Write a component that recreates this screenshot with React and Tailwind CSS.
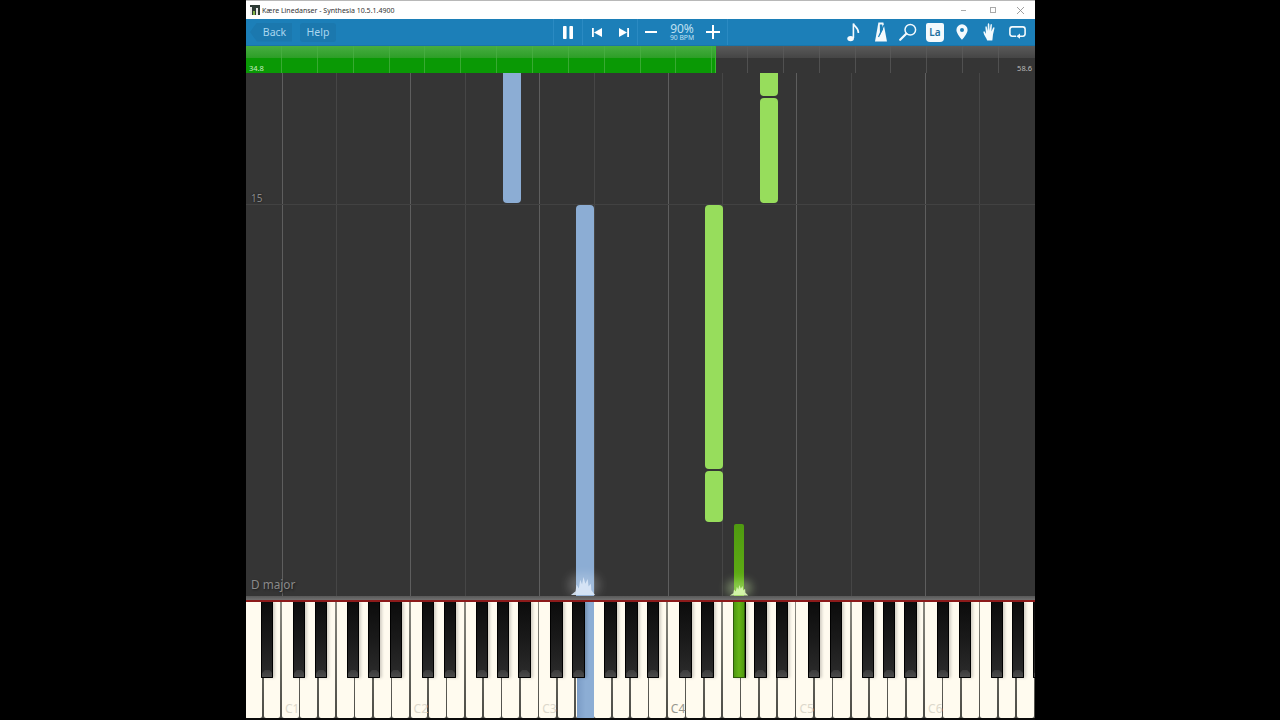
const KEY_W = 18.39;
const KEY_START = -0.8;

const whiteKeys = Array.from({ length: 44 }, (_, i) => i);
const labels = { 2: 'C1', 9: 'C2', 16: 'C3', 23: 'C4', 30: 'C5', 37: 'C6' };

// black keys sit at these offsets from the C of each octave
const blackOffsets = [11, 33, 65, 86, 107.5];
const octavePx = KEY_W * 7;
const blackLefts = [15];
for (let o = 0; o < 7; o++) {
  for (const off of blackOffsets) {
    blackLefts.push(36 + o * octavePx + off);
  }
}

const gridLines = [
  [36, 'bg-[#5e5e5e]'], [90, 'bg-[#464646]'], [164, 'bg-[#5e5e5e]'], [219, 'bg-[#464646]'],
  [293, 'bg-[#5e5e5e]'], [348, 'bg-[#464646]'], [422, 'bg-[#5e5e5e]'], [476, 'bg-[#464646]'],
  [550, 'bg-[#5e5e5e]'], [605, 'bg-[#464646]'], [679, 'bg-[#5e5e5e]'], [733, 'bg-[#464646]'],
];

const notes = [
  { l: 257, t: -4, w: 18, h: 134, c: 'bg-[#8cadd4] rounded-[4px]' },
  { l: 330, t: 132, w: 18, h: 400, c: 'bg-[#8cadd4] rounded-t-[4px]' },
  { l: 514, t: -4, w: 18, h: 27, c: 'bg-[#97dd5c] rounded-[4px]' },
  { l: 514, t: 25, w: 18, h: 105, c: 'bg-[#97dd5c] rounded-[4px]' },
  { l: 459, t: 132, w: 18, h: 264, c: 'bg-[#97dd5c] rounded-[4px]' },
  { l: 459, t: 398, w: 18, h: 51, c: 'bg-[#97dd5c] rounded-[4px]' },
  { l: 488, t: 451, w: 10, h: 80, c: 'bg-gradient-to-b from-[#4f9a10] to-[#66b416] rounded-t-[2px]' },
];

const ticks = Array.from({ length: 21 }, (_, i) => 35 + i * 35.85);

function PauseIcon() {
  return (
    <svg width="10" height="13" viewBox="0 0 10 13" fill="#fff">
      <rect x="0" y="0" width="3.6" height="13" rx="0.8" />
      <rect x="6.4" y="0" width="3.6" height="13" rx="0.8" />
    </svg>
  );
}

function PrevIcon() {
  return (
    <svg width="10" height="9" viewBox="0 0 10 9" fill="#fff">
      <rect x="0" y="0" width="1.8" height="9" />
      <path d="M10 0v9L2 4.5z" />
    </svg>
  );
}

function NextIcon() {
  return (
    <svg width="10" height="9" viewBox="0 0 10 9" fill="#fff">
      <rect x="8.2" y="0" width="1.8" height="9" />
      <path d="M0 0v9l8-4.5z" />
    </svg>
  );
}

function NoteIcon() {
  return (
    <svg width="13" height="20" viewBox="0 0 13 20" fill="none">
      <ellipse cx="3.6" cy="16.6" rx="3.3" ry="2.6" fill="#f4fafd" />
      <path d="M6.4 16V1.5c.6 3 5.5 4.5 5 9.5" stroke="#f4fafd" strokeWidth="1.6" />
    </svg>
  );
}

function MetronomeIcon() {
  return (
    <svg width="12" height="20" viewBox="0 0 12 20">
      <path d="M3.4 0.5h5L12 19.5H0z" fill="#f4fafd" />
      <path d="M3.5 15L9 3" stroke="#1c7fb8" strokeWidth="1.2" />
      <path d="M4.8 2.5h2.4L8 7.5 5 13z" fill="#1c7fb8" />
    </svg>
  );
}

function SearchIcon() {
  return (
    <svg width="18" height="18" viewBox="0 0 18 18" fill="none" stroke="#f4fafd">
      <circle cx="11.3" cy="6.7" r="5.3" strokeWidth="1.5" />
      <path d="M7.2 10.8L1.2 16.8" strokeWidth="2.2" strokeLinecap="round" />
    </svg>
  );
}

function PinIcon() {
  return (
    <svg width="12" height="16" viewBox="0 0 12 16">
      <path
        fillRule="evenodd"
        fill="#f4fafd"
        d="M6 0.3a5.6 5.6 0 0 1 5.6 5.6C11.6 9.6 6 15.7 6 15.7S.4 9.6.4 5.9A5.6 5.6 0 0 1 6 .3zm0 3.6a2 2 0 1 0 0 4 2 2 0 0 0 0-4z"
      />
    </svg>
  );
}

function HandIcon() {
  return (
    <svg width="13" height="18" viewBox="0 0 13 18" fill="#f4fafd">
      <path d="M3 11L2.4 4.2c-.1-1.2 1.2-1.3 1.4-.2L4.6 8l.2-6.8c0-1.2 1.4-1.2 1.5 0l.3 6.6.9-6c.2-1.1 1.5-1 1.4.2L8.4 8.4l1.7-3.6c.5-1 1.7-.5 1.3.6L10 11.4c-.3 2-.2 3.2-.7 6H4.2C3.8 15.4.8 12.2.4 9.3c-.1-1 1-1.3 1.5-.4z" />
    </svg>
  );
}

function LoopIcon() {
  return (
    <svg width="17" height="13" viewBox="0 0 17 13" fill="none" stroke="#f4fafd" strokeWidth="1.6">
      <path d="M7 10.2H3.2A2.4 2.4 0 0 1 .9 7.8V3.2A2.4 2.4 0 0 1 3.2.9h10.6a2.4 2.4 0 0 1 2.3 2.3v4.6a2.4 2.4 0 0 1-2.3 2.4H9.5" />
      <path d="M11 7.6v5.2L7.4 10.2z" fill="#f4fafd" stroke="none" />
    </svg>
  );
}

function Splash({ color, width, height }) {
  return (
    <svg width={width} height={height} viewBox="0 0 28 20" preserveAspectRatio="none" className="blur-[0.3px] opacity-90">
      <path
        fill={color}
        d="M1 19L6 15 7 8 9.5 12 11 3 13 8 14.5 0 16.5 7 19 2 20 10 22.5 7 23 14 27 19z"
      />
    </svg>
  );
}

function BlackKey({ left }) {
  return (
    <div
      className="absolute top-0 w-[12.4px] h-[76px] rounded-b-[1px] border-x border-b border-black bg-gradient-to-b from-[#0c0c0c] via-[#1a1a1a] to-[#2c2c2c] shadow-[2px_0_3px_rgba(0,0,0,0.18)] flex flex-col justify-end overflow-hidden"
      style={{ left }}
    >
      <div className="h-[7px] bg-gradient-to-b from-[#3a3a3a] to-[#4c4c4c] [clip-path:polygon(28%_0,72%_0,100%_45%,100%_100%,0_100%,0_45%)]" />
    </div>
  );
}

export default function App() {
  return (
    <div className="h-screen bg-black overflow-hidden font-['Noto_Sans',sans-serif]">
      <div className="ml-[246px] w-[789px] h-[720px] flex flex-col bg-black">
        {/* title bar */}
        <div className="h-[19px] shrink-0 bg-white border-t border-[#b8b8b8] flex items-center pl-[4px] pr-[11px]">
          <div className="w-[10px] h-[10px] bg-[#2c3a34] flex items-end gap-px overflow-hidden mr-[2px]">
            <span className="w-[2px] h-[8px] bg-[#e8e8e8]" />
            <span className="w-[2px] h-[4px] bg-[#7fb24a]" />
            <span className="w-[2px] h-[7px] bg-[#e8e8e8]" />
          </div>
          <span className="text-[7px] leading-none text-[#333]">Kære Linedanser - Synthesia 10.5.1.4900</span>
          <div className="ml-auto flex items-center">
            <span className="w-[5px] h-px bg-[#aaa]" />
            <span className="ml-[24px] w-[6px] h-[6px] border border-[#aaa]" />
            <svg className="ml-[21px]" width="7" height="7" viewBox="0 0 7 7" stroke="#888" strokeWidth="0.8"><path d="M0 0l7 7M7 0L0 7" /></svg>
          </div>
        </div>

        {/* toolbar */}
        <div className="h-[27px] shrink-0 bg-[#1c7fb8] flex items-center border-b border-[#1a75a9]">
          <div className="ml-[4px] w-[42px] h-[19px] pt-[2px] bg-[#1b78ae] [clip-path:polygon(7px_0,100%_0,100%_100%,7px_100%,0_50%)] flex items-center justify-center pl-[7px] text-[10.5px] text-[#a9d6ee]">
            Back
          </div>
          <div className="ml-[8px] w-[36px] h-[19px] pt-[2px] rounded-[3px] bg-[#1b78ae] flex items-center justify-center text-[10.5px] text-[#a9d6ee]">
            Help
          </div>
          <div className="ml-[217px] w-px h-full bg-[#2b8ac2]" />
          <div className="w-[28px] flex justify-center"><PauseIcon /></div>
          <div className="w-px h-full bg-[#2b8ac2]" />
          <div className="w-[27px] flex justify-center"><PrevIcon /></div>
          <div className="w-[27px] flex justify-center"><NextIcon /></div>
          <div className="w-px h-full bg-[#2b8ac2]" />
          <div className="ml-[7px] w-[12px] h-[2.4px] bg-white" />
          <div className="ml-[11px] w-[28px] flex flex-col items-center text-[#bfe0f2]">
            <span className="text-[12px] leading-[11px]">90%</span>
            <span className="text-[6.8px] leading-[7px]">90 BPM</span>
          </div>
          <div className="ml-[10px] relative w-[14px] h-[14px]">
            <div className="absolute left-0 top-[5.8px] w-[14px] h-[2.4px] bg-white" />
            <div className="absolute top-0 left-[5.8px] w-[2.4px] h-[14px] bg-white" />
          </div>
          <div className="ml-[7px] w-px h-full bg-[#2b8ac2]" />
          <div className="ml-[119px] flex items-center">
            <div className="w-[13px] flex justify-center"><NoteIcon /></div>
            <div className="ml-[15px] w-[12px] flex justify-center"><MetronomeIcon /></div>
            <div className="ml-[12px] w-[18px] flex justify-center"><SearchIcon /></div>
            <div className="ml-[9px] w-[18px] h-[19px] rounded-[2px] rounded-b-[4px] bg-[#f4fafd] text-[#1c6f9f] text-[10px] font-semibold flex items-center justify-center">La</div>
            <div className="ml-[12px] w-[12px] flex justify-center"><PinIcon /></div>
            <div className="ml-[15px] w-[13px] flex justify-center"><HandIcon /></div>
            <div className="ml-[13px] w-[17px] flex justify-center"><LoopIcon /></div>
          </div>
        </div>

        {/* progress bar */}
        <div className="h-[27px] shrink-0 relative flex bg-[#353535] overflow-hidden">
          <div className="w-[469px] flex flex-col">
            <div className="h-[12px] bg-gradient-to-b from-[#46ad40] to-[#2d9e27]" />
            <div className="flex-1 bg-[#0a9905]" />
          </div>
          <div className="flex-1 flex flex-col">
            <div className="h-[12px] bg-gradient-to-b from-[#5a5a5a] to-[#454545]" />
            <div className="flex-1 bg-[#353535]" />
          </div>
          {ticks.map((x) => (
            <div
              key={x}
              className={`absolute top-0 bottom-0 w-px ${x < 469 ? 'bg-[#4cb046]/70' : 'bg-[#5c5c5c]/70'}`}
              style={{ left: x }}
            />
          ))}
          <div className="absolute left-[469px] top-0 bottom-0 w-px bg-[#36b82e]" />
          <span className="absolute left-[3px] bottom-0 text-[7.5px] leading-[9px] text-[#c6ecc2]">34.8</span>
          <span className="absolute right-[3px] bottom-0 text-[7.5px] leading-[9px] text-[#bbb]">58.6</span>
        </div>

        {/* falling notes */}
        <div className="flex-1 relative bg-[#353535] overflow-hidden">
          {gridLines.map(([x, c]) => (
            <div key={x} className={`absolute top-0 bottom-0 w-px ${c}`} style={{ left: x }} />
          ))}
          <div className="absolute left-0 right-0 top-[131px] h-px bg-[#424242]" />
          <span className="absolute left-[5px] top-[119px] text-[10px] leading-[12px] text-[#8a8a8a] [text-shadow:0_0_2px_#111]">15</span>
          <span className="absolute left-[5px] top-[504px] text-[11.8px] leading-[15px] text-[#8a8a8a] [text-shadow:1px_1px_2px_#1c1c1c]">D major</span>
          {notes.map((n) => (
            <div
              key={`${n.l}-${n.t}`}
              className={`absolute ${n.c}`}
              style={{ left: n.l, top: n.t, width: n.w, height: n.h }}
            />
          ))}
          <div className="absolute left-[322px] bottom-0 w-[32px] h-[22px] rounded-full bg-white/20 blur-[5px]" />
          <div className="absolute left-[324px] bottom-0"><Splash color="#dbe8f8" width={26} height={19} /></div>
          <div className="absolute left-[480px] bottom-0 w-[26px] h-[16px] rounded-full bg-[#d8ffb0]/35 blur-[4px]" />
          <div className="absolute left-[483px] bottom-0"><Splash color="#dcfab4" width={20} height={11} /></div>
        </div>

        {/* red line */}
        <div className="h-[4px] shrink-0 bg-gradient-to-b from-[#585858] to-[#717171]" />
        <div className="h-[2px] shrink-0 bg-[#8c1a1a]" />

        {/* keyboard */}
        <div className="h-[116px] shrink-0 relative overflow-hidden bg-gradient-to-b from-[#8a8980] to-[#4c4c46]">
          <div className="flex h-full" style={{ marginLeft: KEY_START }}>
            {whiteKeys.map((i) => (
              <div key={i} className="w-[18.39px] shrink-0 h-full pr-[1.6px]">
                <div className="h-full relative rounded-b-[2px] bg-[#fffbef]">
                  {labels[i] && (
                    <span className={`absolute left-[3px] bottom-[2px] text-[12px] leading-[14px] ${i === 23 ? 'text-[#97978e]' : 'text-[#dcd8cb]'}`}>
                      {labels[i]}
                    </span>
                  )}
                </div>
              </div>
            ))}
          </div>
          {/* lit keys */}
          <div className="absolute left-[331px] top-0 h-[116px] w-[17px] bg-gradient-to-r from-[#7b9cc6] via-[#8cadd4] to-[#8cadd4]" />
          {blackLefts.map((x) => (
            <BlackKey key={x} left={x} />
          ))}
          <div className="absolute left-[487px] top-0 w-[12.4px] h-[76px] border-x border-b border-[#2f5c0a] bg-gradient-to-r from-[#4f9a10] via-[#66b416] to-[#4f9a10]" />
        </div>
        <div className="h-[2px] shrink-0 bg-[#0a0a0a]" />
      </div>
    </div>
  );
}
